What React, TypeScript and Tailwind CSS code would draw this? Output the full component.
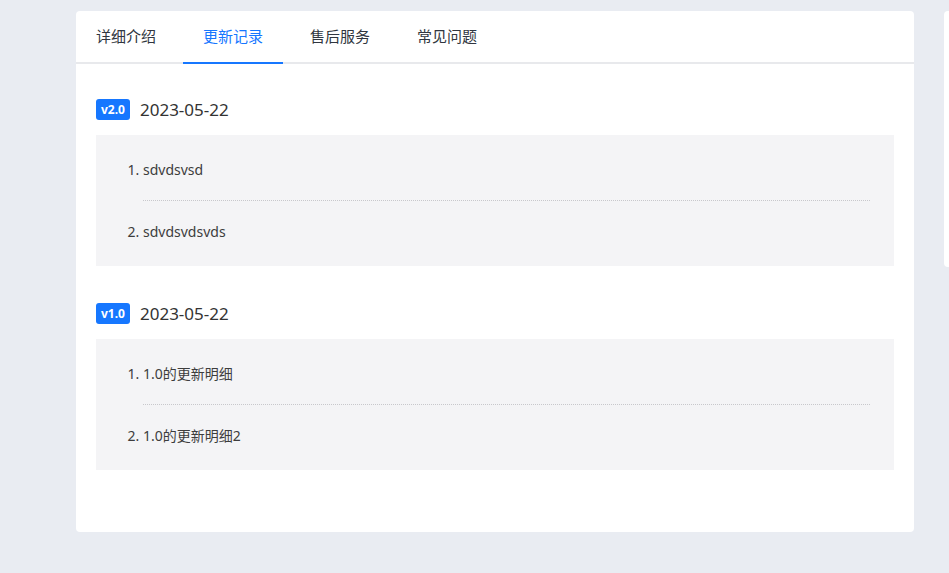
const tabs = ['详细介绍', '更新记录', '售后服务', '常见问题'];

const releases = [
  { version: 'v2.0', date: '2023-05-22', items: ['sdvdsvsd', 'sdvdsvdsvds'] },
  { version: 'v1.0', date: '2023-05-22', items: ['1.0的更新明细', '1.0的更新明细2'] },
];

function Release({ version, date, items }: { version: string; date: string; items: string[] }) {
  return (
    <div>
      <div className="flex items-center h-[21px]">
        <span className="h-[21px] px-[5px] rounded-[3px] bg-[#1677ff] text-white text-[12px] font-bold leading-[21px]">
          {version}
        </span>
        <span className="ml-[10px] text-[17px] text-[#333] leading-[21px]">{date}</span>
      </div>
      <div className="mt-[15px] bg-[#f4f4f6] py-6 pr-6 pl-[47px]">
        <ol className="list-decimal list-outside text-[14px] leading-[21px] text-[#3d3d3d]">
          {items.map((item, i) => (
            <li
              key={item}
              className={i === 0 ? 'pb-5 border-b border-dotted border-[#c8c8cc]' : 'pt-5'}
            >
              {item}
            </li>
          ))}
        </ol>
      </div>
    </div>
  );
}

export default function App() {
  const active = 1;
  return (
    <div
      className="w-screen h-[573px] overflow-hidden bg-[#e9ecf2] flex items-start pt-[11px]"
      style={{ fontFamily: '"Noto Sans", "Noto Sans CJK SC", sans-serif' }}
    >
      <div className="ml-[76px] w-[838px] h-[521px] shrink-0 bg-white rounded-[4px]">
        <div className="flex gap-[7px] h-[53px] border-b-2 border-[#e8e9ec]">
          {tabs.map((t, i) => (
            <button
              key={t}
              className={
                i === active
                  ? 'relative w-[100px] text-[15px] text-[#1677ff]'
                  : 'relative w-[100px] text-[15px] text-[#303640]'
              }
            >
              {t}
              {i === active && (
                <span className="absolute left-0 right-0 -bottom-[2px] h-[2px] bg-[#1677ff]" />
              )}
            </button>
          ))}
        </div>
        <div className="px-5 pt-[35px] flex flex-col gap-[37px]">
          {releases.map((r) => (
            <Release key={r.version} {...r} />
          ))}
        </div>
      </div>
      <div className="ml-[30px] w-[240px] h-[256px] shrink-0 bg-white rounded-[4px]" />
    </div>
  );
}
